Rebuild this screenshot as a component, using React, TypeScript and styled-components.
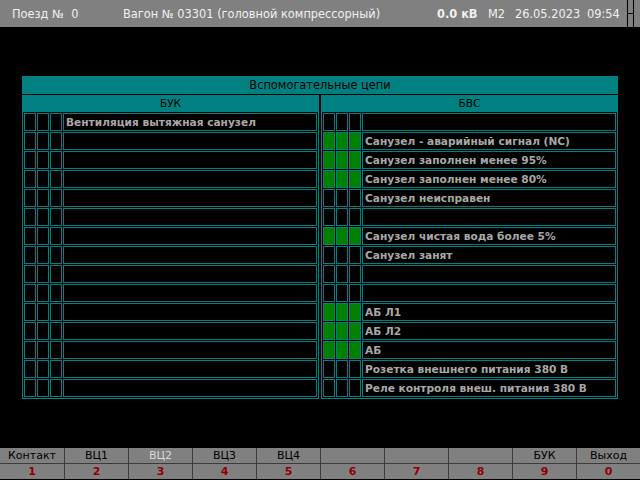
import React from 'react'
import styled, { createGlobalStyle } from 'styled-components'

const TEAL = '#008080'

const GlobalStyle = createGlobalStyle`
  html, body {
    margin: 0;
    padding: 0;
    background: #000;
  }
  body {
    font-family: "DejaVu Sans", Tahoma, sans-serif;
  }
`

const Screen = styled.div`
  width: 640px;
  height: 480px;
  background: #000;
  display: flex;
  flex-direction: column;
  overflow: hidden;
`

const TopBar = styled.div`
  height: 27px;
  background: #808080;
  display: grid;
  grid-template-columns: 111px 314px 51px 27px 72px 40px 1fr;
  align-items: center;
  padding-left: 12px;
  color: #f0f0f0;
  font-size: 11.4px;
  white-space: pre;
`

const TopItem = styled.span<{ $bold?: boolean }>`
  font-weight: ${p => (p.$bold ? 'bold' : 'normal')};
`

const Corner = styled.div`
  align-self: stretch;
  width: 5px;
  border-left: 1px solid #000;
  border-right: 1px solid #000;
  display: flex;
  align-items: center;
  &::after {
    content: '';
    display: block;
    width: 100%;
    height: 1px;
    background: #000;
  }
`

const Main = styled.div`
  flex: 1;
  padding: 49px 0 0 22px;
`

const Panel = styled.div`
  width: 596px;
  display: flex;
  flex-direction: column;
  gap: 1px;
`

const PanelTitle = styled.div`
  height: 18px;
  background: ${TEAL};
  color: #000;
  font-size: 11.4px;
  line-height: 19px;
  text-align: center;
`

const Columns = styled.div`
  display: flex;
  gap: 2px;
`

const Column = styled.div`
  width: 297px;
  box-sizing: border-box;
  border: 1px solid ${TEAL};
  background: #000;
`

const ColumnHeader = styled.div`
  height: 16px;
  background: ${TEAL};
  color: #000;
  font-size: 10.6px;
  line-height: 15px;
  text-align: center;
`

const Rows = styled.div`
  padding: 1px;
  display: flex;
  flex-direction: column;
  gap: 1px;
`

const Row = styled.div`
  display: flex;
  gap: 1px;
  height: 18px;
`

const Lamp = styled.div<{ $on?: boolean }>`
  width: 12px;
  box-sizing: border-box;
  border: 1px solid ${TEAL};
  background: ${p => (p.$on ? '#008000' : '#000')};
`

const Label = styled.div`
  flex: 1;
  box-sizing: border-box;
  border: 1px solid ${TEAL};
  padding-left: 2px;
  color: #a8a8a8;
  font-size: 10.6px;
  font-weight: bold;
  line-height: 16px;
  white-space: nowrap;
  overflow: hidden;
`

const BottomBar = styled.div`
  height: 31px;
  margin-bottom: 1px;
  background: #808080;
  display: grid;
  grid-template-columns: repeat(10, 64px);
`

const Key = styled.div`
  display: flex;
  flex-direction: column;
  border-left: 1px solid #3c3c3c;
  &:first-child {
    border-left: none;
  }
`

const KeyName = styled.div<{ $active?: boolean }>`
  height: 15px;
  border-bottom: 1px solid #3c3c3c;
  color: ${p => (p.$active ? '#d8d8d8' : '#000')};
  font-size: 11px;
  line-height: 15px;
  text-align: center;
`

const KeyNum = styled.div`
  flex: 1;
  color: #900000;
  font-size: 11px;
  font-weight: bold;
  line-height: 15px;
  text-align: center;
`

type Item = { text: string; on?: boolean }

const LEFT: Item[] = [
  { text: 'Вентиляция вытяжная санузел' },
  ...Array.from({ length: 14 }, () => ({ text: '' })),
]

const RIGHT: Item[] = [
  { text: '' },
  { text: 'Санузел - аварийный сигнал (NC)', on: true },
  { text: 'Санузел заполнен менее 95%', on: true },
  { text: 'Санузел заполнен менее 80%', on: true },
  { text: 'Санузел неисправен' },
  { text: '' },
  { text: 'Санузел чистая вода более 5%', on: true },
  { text: 'Санузел занят' },
  { text: '' },
  { text: '' },
  { text: 'АБ Л1', on: true },
  { text: 'АБ Л2', on: true },
  { text: 'АБ', on: true },
  { text: 'Розетка внешнего питания 380 В' },
  { text: 'Реле контроля внеш. питания 380 В' },
]

const KEYS = [
  { name: 'Контакт', num: '1' },
  { name: 'ВЦ1', num: '2' },
  { name: 'ВЦ2', num: '3', active: true },
  { name: 'ВЦ3', num: '4' },
  { name: 'ВЦ4', num: '5' },
  { name: '', num: '6' },
  { name: '', num: '7' },
  { name: '', num: '8' },
  { name: 'БУК', num: '9' },
  { name: 'Выход', num: '0' },
]

function SignalColumn({ title, items }: { title: string; items: Item[] }) {
  return (
    <Column>
      <ColumnHeader>{title}</ColumnHeader>
      <Rows>
        {items.map((it, i) => (
          <Row key={i}>
            <Lamp $on={it.on} />
            <Lamp $on={it.on} />
            <Lamp $on={it.on} />
            <Label>{it.text}</Label>
          </Row>
        ))}
      </Rows>
    </Column>
  )
}

export default function App() {
  return (
    <>
      <GlobalStyle />
      <Screen>
        <TopBar>
          <TopItem>Поезд №  0</TopItem>
          <TopItem>Вагон № 03301 (головной компрессорный)</TopItem>
          <TopItem $bold>0.0 кВ</TopItem>
          <TopItem>М2</TopItem>
          <TopItem>26.05.2023</TopItem>
          <TopItem>09:54</TopItem>
          <Corner />
        </TopBar>
        <Main>
          <Panel>
            <PanelTitle>Вспомогательные цепи</PanelTitle>
            <Columns>
              <SignalColumn title="БУК" items={LEFT} />
              <SignalColumn title="БВС" items={RIGHT} />
            </Columns>
          </Panel>
        </Main>
        <BottomBar>
          {KEYS.map(k => (
            <Key key={k.num}>
              <KeyName $active={k.active}>{k.name}</KeyName>
              <KeyNum>{k.num}</KeyNum>
            </Key>
          ))}
        </BottomBar>
      </Screen>
    </>
  )
}
